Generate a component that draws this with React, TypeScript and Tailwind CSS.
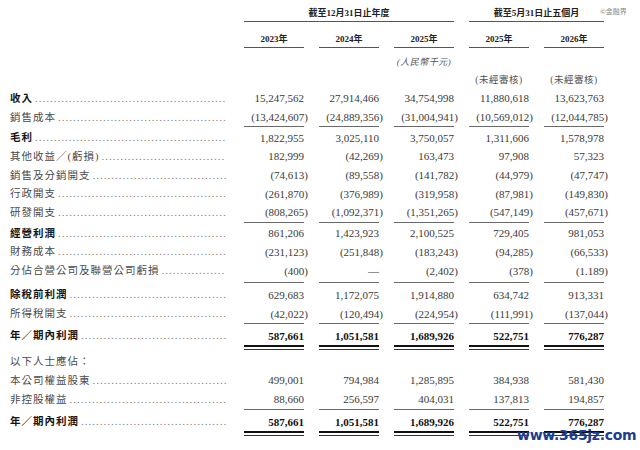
import React from "react";

type Row = {
  label: string;
  bold?: boolean;
  strong?: boolean; // bold figures
  noDots?: boolean;
  values?: string[];
};

const serif = "font-['Liberation_Serif','Noto_Sans_CJK_TC',serif]";

// rough width of a label so the leader dots stop at the column edge
const labelWidth = (s: string) =>
  Array.from(s).reduce((w, ch) => w + (/[\x00-\x7f]/.test(ch) ? 4.6 : 11.5), 0);
const leader = (s: string) =>
  ".".repeat(Math.max(0, Math.floor((228 - 10 - 2 - labelWidth(s)) / 3.75)));

const totals = ["587,661", "1,051,581", "1,689,926", "522,751", "776,287"];

const top: Row[] = [
  { label: "收入", bold: true, values: ["15,247,562", "27,914,466", "34,754,998", "11,880,618", "13,623,763"] },
  { label: "銷售成本", values: ["(13,424,607)", "(24,889,356)", "(31,004,941)", "(10,569,012)", "(12,044,785)"] },
];
const mid: Row[] = [
  { label: "毛利", bold: true, values: ["1,822,955", "3,025,110", "3,750,057", "1,311,606", "1,578,978"] },
  { label: "其他收益／(虧損)", values: ["182,999", "(42,269)", "163,473", "97,908", "57,323"] },
  { label: "銷售及分銷開支", values: ["(74,613)", "(89,558)", "(141,782)", "(44,979)", "(47,747)"] },
  { label: "行政開支", values: ["(261,870)", "(376,989)", "(319,958)", "(87,981)", "(149,830)"] },
  { label: "研發開支", values: ["(808,265)", "(1,092,371)", "(1,351,265)", "(547,149)", "(457,671)"] },
];
const op: Row[] = [
  { label: "經營利潤", bold: true, values: ["861,206", "1,423,923", "2,100,525", "729,405", "981,053"] },
  { label: "財務成本", values: ["(231,123)", "(251,848)", "(183,243)", "(94,285)", "(66,533)"] },
  { label: "分佔合營公司及聯營公司虧損", values: ["(400)", "—", "(2,402)", "(378)", "(1.189)"] },
];
const pbt: Row[] = [
  { label: "除稅前利潤", bold: true, values: ["629,683", "1,172,075", "1,914,880", "634,742", "913,331"] },
  { label: "所得稅開支", values: ["(42,022)", "(120,494)", "(224,954)", "(111,991)", "(137,044)"] },
];
const attrib: Row[] = [
  { label: "以下人士應佔：", noDots: true },
  { label: "本公司權益股東", values: ["499,001", "794,984", "1,285,895", "384,938", "581,430"] },
  { label: "非控股權益", values: ["88,660", "256,597", "404,031", "137,813", "194,857"] },
];

function Num({ v }: { v: string }) {
  // closing bracket hangs past the column edge, as in the printed accounts
  if (v.endsWith(")")) {
    return (
      <>
        {v.slice(0, -1)}
        <span className="mr-[-4px]">)</span>
      </>
    );
  }
  return <>{v}</>;
}

function Line({ row }: { row: Row }) {
  return (
    <div className="flex h-[18.7px] items-center">
      <div className="ml-[10px] flex w-[222px] items-baseline whitespace-nowrap">
        <span
          className={`text-[10.5px] leading-[14px] tracking-[1px] ${serif} ${
            row.bold ? "font-bold text-[#151515]" : "text-[#4a4a4a]"
          }`}
        >
          {row.label}
        </span>
        {!row.noDots && (
          <span className={`ml-[2px] text-[11px] leading-[14px] tracking-[1px] text-[#808080] ${serif}`}>
            {leader(row.label)}
          </span>
        )}
      </div>
      {row.values && (
        <div className="ml-[12px] flex gap-[15px]">
          {row.values.map((v, i) => (
            <div
              key={i}
              className={`w-[60px] whitespace-nowrap text-right text-[11px] leading-[14px] ${serif} ${
                row.strong ? "font-bold text-[#111]" : "text-[#3a3a3a]"
              }`}
            >
              <Num v={v} />
            </div>
          ))}
        </div>
      )}
    </div>
  );
}

function Rule({ before = 0, total = 2 }: { before?: number; total?: number }) {
  return (
    <div className="flex" style={{ height: total, paddingTop: before }}>
      <div className="ml-[244px] flex gap-[15px]">
        {[0, 1, 2, 3, 4].map((i) => (
          <div key={i} className="h-px w-[60px] bg-[#6a6a6a]" />
        ))}
      </div>
    </div>
  );
}

function DoubleRule({ after = 2.3 }: { after?: number }) {
  return (
    <div className="ml-[244px] flex gap-[15px]" style={{ paddingBottom: after }}>
      {[0, 1, 2, 3, 4].map((i) => (
        <div key={i} className="flex w-[60px] flex-col gap-[2px]">
          <div className="h-[2px] bg-[#111]" />
          <div className="h-px bg-[#333]" />
        </div>
      ))}
    </div>
  );
}

export default function App() {
  const years = ["2023年", "2024年", "2025年", "2025年", "2026年"];
  return (
    <div className="relative h-[450px] w-[640px] overflow-hidden bg-white">
      {/* column headings */}
      <div className="ml-[244px] flex gap-[15px]">
        <div className={`flex h-[22px] w-[210px] items-end justify-center border-b border-[#555] pb-[2px] text-[9px] font-bold leading-[12px] text-[#222] ${serif}`}>
          截至12月31日止年度
        </div>
        <div className={`flex h-[22px] w-[135px] items-end justify-center border-b border-[#555] pb-[2px] text-[9px] font-bold leading-[12px] text-[#222] ${serif}`}>
          截至5月31日止五個月
        </div>
      </div>
      <div className="ml-[244px] flex gap-[15px]">
        {years.map((y, i) => (
          <div
            key={i}
            className={`flex h-[26px] w-[60px] items-end justify-center border-b border-[#555] pb-[2px] text-[9px] font-bold leading-[12px] text-[#222] ${serif}`}
          >
            {y}
          </div>
        ))}
      </div>
      <div className="ml-[244px] flex h-[27px] items-center gap-[15px]">
        <div className="w-[60px]" />
        <div className="w-[60px]" />
        <div className={`w-[60px] text-center text-[9px] italic leading-[12px] tracking-[0.5px] text-[#555] ${serif}`}>
          (人民幣千元)
        </div>
      </div>
      <div className="ml-[244px] flex h-[14px] items-start gap-[15px]">
        <div className="w-[60px]" />
        <div className="w-[60px]" />
        <div className="w-[60px]" />
        <div className={`w-[60px] whitespace-nowrap text-center text-[9.5px] leading-[10px] tracking-[0.5px] text-[#555] ${serif}`}>
          (未經審核)
        </div>
        <div className={`w-[60px] whitespace-nowrap text-center text-[9.5px] leading-[10px] tracking-[0.5px] text-[#555] ${serif}`}>
          (未經審核)
        </div>
      </div>

      {/* statement body */}
      {top.map((r, i) => <Line key={i} row={r} />)}
      <Rule />
      {mid.map((r, i) => <Line key={i} row={r} />)}
      <Rule />
      {op.map((r, i) => <Line key={i} row={r} />)}
      <Rule before={2.5} total={5.6} />
      {pbt.map((r, i) => <Line key={i} row={r} />)}
      <Rule total={3.6} />
      <Line row={{ label: "年／期內利潤", bold: true, strong: true, values: totals }} />
      <DoubleRule />
      {attrib.map((r, i) => <Line key={i} row={r} />)}
      <Rule before={0.3} total={3.9} />
      <Line row={{ label: "年／期內利潤", bold: true, strong: true, values: totals }} />
      <DoubleRule after={0} />

      {/* watermarks */}
      <div className="absolute left-[600px] top-[7px] font-['Noto_Sans_CJK_SC',sans-serif] text-[7px] leading-[9px] text-[#8a8a8a]">
        ©金融界
      </div>
      <div className="absolute left-[517px] top-[426px] font-['DejaVu_Sans',sans-serif] text-[14px] font-bold leading-[18px] tracking-[-0.3px] text-[#1d3d8f]">
        www.365jz.com
      </div>
    </div>
  );
}
